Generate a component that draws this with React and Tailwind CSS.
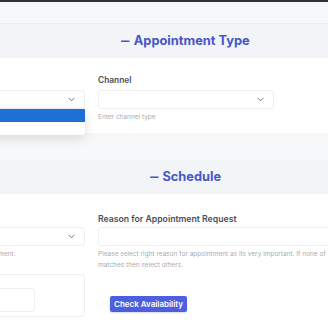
import React from "react";

function Chevron({ className = "" }) {
  return (
    <svg className={className} width="7" height="5" viewBox="0 0 8 5" fill="none">
      <path d="M1 1l3 3 3-3" stroke="#6b7280" strokeWidth="1.1" strokeLinecap="round" strokeLinejoin="round" />
    </svg>
  );
}

function SectionHeader({ title }) {
  return (
    <div className="h-[34px] bg-[#f3f4f7] flex items-center justify-center">
      <span className="text-[12.8px] font-bold text-[#4457c9]">
        <span className="inline-block scale-x-[1.3] mr-[5px]">–</span>
        {title}
      </span>
    </div>
  );
}

function Select({ children }) {
  return (
    <div className="relative h-[19px] bg-white border border-[#eceef2] rounded-[3px] flex items-center justify-end pr-[9px]">
      <Chevron />
      {children}
    </div>
  );
}

export default function App() {
  return (
    <div
      className="w-[328px] h-[320px] overflow-hidden bg-[#f7f8fa] flex flex-col"
      style={{ fontFamily: "Inter, 'Noto Sans', sans-serif" }}
    >
      <div className="h-[2px] bg-[#30343a] shrink-0" />
      <div className="h-[22px] shrink-0 bg-[#f7f8fa] border-b border-[#eaecf0]" />
      <div className="ml-[-91px] w-[554px] shrink-0 flex flex-col">
        <SectionHeader title="Appointment Type" />
        <div className="bg-white h-[75px] pt-[16px] grid grid-cols-[176px_176px_176px] gap-x-[13px]">
          <div className="flex flex-col">
            <div className="h-[16px]" />
            <Select>
              <div className="absolute left-[-1px] right-[-1px] top-[18px] bg-white rounded-b-[4px] shadow-[0_4px_12px_rgba(0,0,0,0.12)] z-10 overflow-hidden">
                <div className="h-[13px] bg-[#1f6fd8]" />
                <div className="h-[13px] bg-white" />
              </div>
            </Select>
          </div>
          <div className="flex flex-col">
            <div className="h-[16px] text-[8.4px] font-semibold text-[#4b5058] leading-[12px]">Channel</div>
            <Select />
            <div className="mt-[3px] text-[6.5px] text-[#a8acb3] leading-[10px]">Enter channel type</div>
          </div>
          <div />
        </div>
        <div className="h-[27px]" />
        <SectionHeader title="Schedule" />
        <div className="bg-white h-[140px] pt-[19px] grid grid-cols-[176px_365px] gap-x-[13px]">
          <div className="flex flex-col">
            <div className="h-[14px]" />
            <Select />
            <div className="mt-[3px] text-[6.5px] text-[#a8acb3] leading-[10px] whitespace-nowrap">Please select type of appointment.</div>
            <div className="mt-[15px] h-[43px] border border-[#eceef2] rounded-[3px] px-[14px] pt-[13px]">
              <div className="w-[111px] h-[24px] border border-[#eceef2] rounded-[3px]" />
            </div>
          </div>
          <div className="flex flex-col">
            <div className="h-[14px] text-[8.7px] font-semibold text-[#4b5058] leading-[12px]">Reason for Appointment Request</div>
            <div className="h-[19px] bg-white border border-[#eceef2] rounded-[3px]" />
            <div className="mt-[3px] text-[6.5px] text-[#a8acb3] leading-[10.5px] whitespace-nowrap">
              Please select right reason for appointment as its very important. If none of
              <br />
              matches then select others.
            </div>
            <div className="mt-[19px] pl-[12px]">
              <button className="h-[16px] w-[77px] bg-[#4c5fe0] rounded-[2px] text-white text-[8px] font-semibold leading-[16px] shadow-[0_1px_2px_rgba(0,0,0,0.15)]">
                Check Availability
              </button>
            </div>
          </div>
        </div>
      </div>
    </div>
  );
}
